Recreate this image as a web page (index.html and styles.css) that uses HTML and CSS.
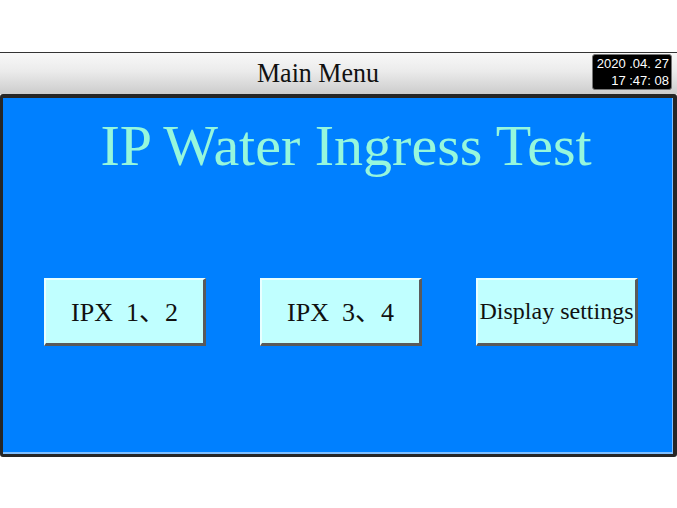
FILE: index.html
```html
<!DOCTYPE html>
<html>
<head>
<meta charset="utf-8">
<link rel="stylesheet" href="styles.css">
</head>
<body>
<div class="screen">
  <div class="header">
    <div class="title">Main Menu</div>
    <div class="clock">
      <div>2020 .04. 27</div>
      <div>17 :47: 08</div>
    </div>
  </div>
  <div class="panel">
    <h1 class="heading">IP Water Ingress Test</h1>
    <div class="buttons">
      <div class="btn btn-cjk">IPX&nbsp;&nbsp;1、2</div>
      <div class="btn btn-cjk">IPX&nbsp;&nbsp;3、4</div>
      <div class="btn">Display settings</div>
    </div>
  </div>
</div>
</body>
</html>
```
FILE: styles.css
```css
html, body {
  margin: 0;
  padding: 0;
  background: #ffffff;
  width: 677px;
  height: 508px;
  overflow: hidden;
}
.screen {
  margin-top: 52px;
  border-top: 1px solid #333;
}
.header {
  height: 41px;
  display: flex;
  background: linear-gradient(#f8f8f8 0%, #ebebeb 45%, #cccccc 100%);
}
.title {
  flex: 1;
  padding-left: 44px;
  text-align: center;
  font-family: "Liberation Serif", serif;
  font-size: 26px;
  line-height: 41px;
  color: #111;
  transform: scaleY(1.05);
}
.clock {
  margin: 1px 5px 0 0;
  width: 80px;
  height: 36px;
  background: #000;
  border: 1px solid #777;
  border-radius: 3px;
  color: #fff;
  font-family: "Liberation Sans", sans-serif;
  font-size: 13px;
  line-height: 17px;
  text-align: right;
  padding-right: 2px;
  box-sizing: border-box;
  padding-top: 0;
}
.panel {
  height: 356px;
  background: #0080ff;
  border-style: solid;
  border-color: #262626;
  border-width: 4px 4px 3px 3px;
  border-radius: 3px;
  box-shadow: inset 0 -2px 0 #7fbfff, inset -1px 0 0 #7fbfff;
}
.heading {
  margin: 15px 0 0 0;
  font-family: "Liberation Serif", serif;
  font-weight: normal;
  font-size: 58px;
  line-height: 66px;
  color: #96f7dc;
  text-align: center;
  padding-left: 16px;
}
.buttons {
  margin-top: 99px;
  padding-left: 41px;
  display: flex;
  gap: 54px;
}
.btn {
  width: 162px;
  height: 68px;
  box-sizing: border-box;
  background: #c0ffff;
  border-style: solid;
  border-width: 2px 3px 3px 2px;
  border-color: #e8ffff #5a5a5a #5a5a5a #e8ffff;
  display: flex;
  align-items: center;
  justify-content: center;
  font-family: "Liberation Serif", serif;
  font-size: 24px;
  color: #111;
  white-space: nowrap;
}
.btn-cjk {
  font-family: "Liberation Serif", "Noto Sans CJK SC", serif;
  font-size: 26px;
  padding-bottom: 4px;
}
```
